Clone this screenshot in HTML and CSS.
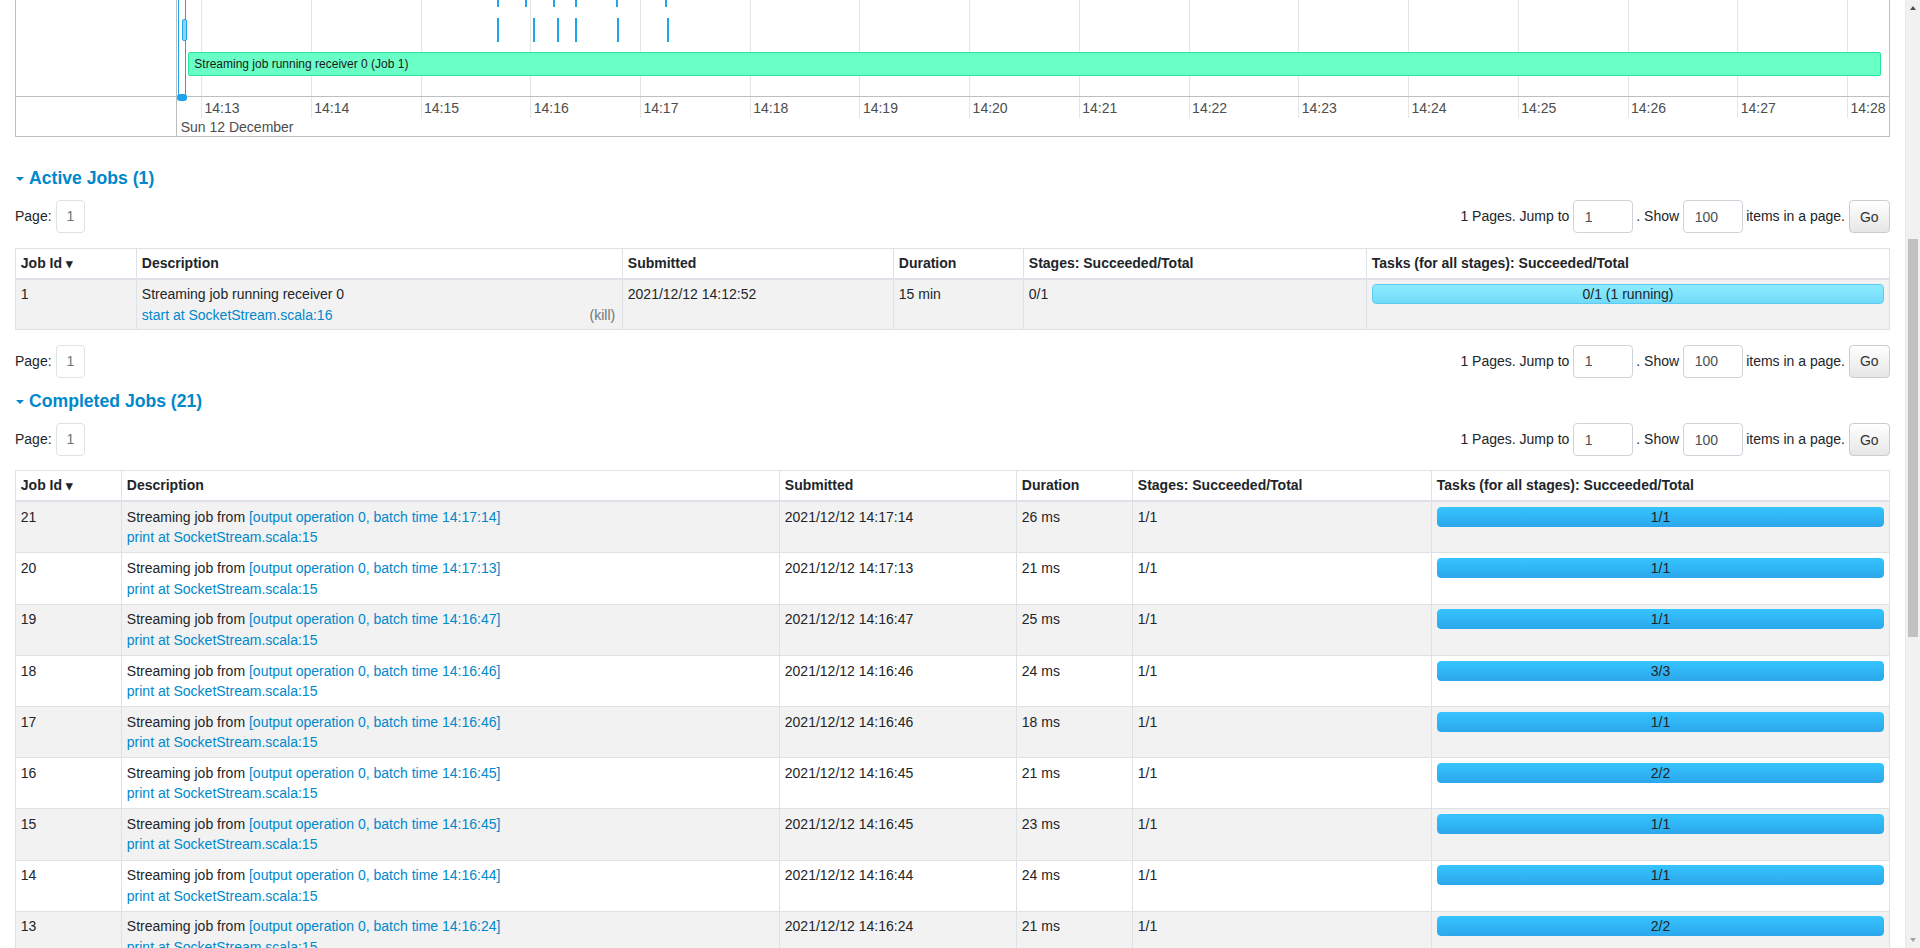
FILE: index.html
```html
<!DOCTYPE html>
<html lang="en">
<head>
<meta charset="utf-8">
<title>SocketStream - Spark Jobs</title>
<link rel="stylesheet" href="styles.css">
</head>
<body>
<nav class="navbar">
  <div class="brand"><span class="logo">Spark</span><span class="version">3.0.0</span></div>
  <ul class="nav-tabs">
    <li class="active">Jobs</li><li>Stages</li><li>Storage</li><li>Environment</li><li>Executors</li><li>Streaming</li>
  </ul>
  <div class="app-name">SocketStream application UI</div>
</nav>
<main class="container">
  <h3 class="page-title">Spark Jobs <sup>(?)</sup></h3>
  <ul class="summary">
    <li><strong>User:</strong> root</li>
    <li><strong>Total Uptime:</strong> 15 min</li>
    <li><strong>Scheduling Mode:</strong> FIFO</li>
    <li><strong>Active Jobs:</strong> 1</li>
    <li><strong>Completed Jobs:</strong> 21</li>
  </ul>
  <div class="section-title"><span class="arrow"></span><span>Event Timeline</span></div>
  <div class="tl-controls">
    <label class="zoom"><input type="checkbox"> Enable zooming</label>
    <div class="legend">
      <span class="lg lg-added"></span>Added
      <span class="lg lg-removed"></span>Removed
      <span class="lg lg-succeeded"></span>Succeeded
      <span class="lg lg-failed"></span>Failed
      <span class="lg lg-running"></span>Running
    </div>
  </div>
  <div class="timeline">
    <div class="tl-body">
      <div class="tl-labels">
        <div class="tl-group-label exec">Executors</div>
        <div class="tl-group-label jobs">Jobs</div>
      </div>
      <div class="tl-canvas">
        <div class="tl-grid" style="left:24px"></div>
        <div class="tl-grid" style="left:133.7px"></div>
        <div class="tl-grid" style="left:243.5px"></div>
        <div class="tl-grid" style="left:353.2px"></div>
        <div class="tl-grid" style="left:462.9px"></div>
        <div class="tl-grid" style="left:572.7px"></div>
        <div class="tl-grid" style="left:682.4px"></div>
        <div class="tl-grid" style="left:792.1px"></div>
        <div class="tl-grid" style="left:901.8px"></div>
        <div class="tl-grid" style="left:1011.6px"></div>
        <div class="tl-grid" style="left:1121.3px"></div>
        <div class="tl-grid" style="left:1231px"></div>
        <div class="tl-grid" style="left:1340.8px"></div>
        <div class="tl-grid" style="left:1450.5px"></div>
        <div class="tl-grid" style="left:1560.2px"></div>
        <div class="tl-grid" style="left:1670px"></div>
        <div class="tl-exec-sep"></div>

        <div class="tl-vline" style="left:1px"></div>
        <div class="tl-vline" style="left:8px"></div>
        <div class="tl-box" style="left:2px">Executor driver added</div>

        <div class="tl-job" style="left:319.9px; bottom:157px"></div>
        <div class="tl-job" style="left:352px; bottom:157px"></div>
        <div class="tl-job" style="left:378px; bottom:157px"></div>
        <div class="tl-job" style="left:439px; bottom:157px"></div>
        <div class="tl-job" style="left:319.9px; bottom:123px"></div>
        <div class="tl-job" style="left:348.4px; bottom:123px"></div>
        <div class="tl-job" style="left:397.5px; bottom:123px"></div>
        <div class="tl-job" style="left:488px; bottom:123px"></div>

        <div class="tl-job" style="left:319.9px; bottom:89px"></div>
        <div class="tl-job" style="left:348.4px; bottom:89px"></div>
        <div class="tl-job" style="left:375.7px; bottom:89px"></div>
        <div class="tl-job" style="left:397.5px; bottom:89px"></div>
        <div class="tl-job" style="left:439px; bottom:89px"></div>
        <div class="tl-job" style="left:488px; bottom:89px"></div>

        <div class="tl-job" style="left:319.9px; bottom:54.3px"></div>
        <div class="tl-job" style="left:356px; bottom:54.3px"></div>
        <div class="tl-job" style="left:379.7px; bottom:54.3px"></div>
        <div class="tl-job" style="left:397.5px; bottom:54.3px"></div>
        <div class="tl-job" style="left:439.5px; bottom:54.3px"></div>
        <div class="tl-job" style="left:490px; bottom:54.3px"></div>
        <div class="tl-job wide" style="left:4.7px; bottom:55px"></div>

        <div class="tl-running">Streaming job running receiver 0 (Job 1)</div>
      </div>
    </div>
    <div class="tl-axis-row">
      <div class="tl-axis-side"></div>
      <div class="tl-axis">
        <div class="tl-dot"></div>
        <div class="ax-grid" style="left:24px"></div><span class="ax-label" style="left:27.5px">14:13</span>
        <div class="ax-grid" style="left:133.7px"></div><span class="ax-label" style="left:137.2px">14:14</span>
        <div class="ax-grid" style="left:243.5px"></div><span class="ax-label" style="left:247px">14:15</span>
        <div class="ax-grid" style="left:353.2px"></div><span class="ax-label" style="left:356.7px">14:16</span>
        <div class="ax-grid" style="left:462.9px"></div><span class="ax-label" style="left:466.4px">14:17</span>
        <div class="ax-grid" style="left:572.7px"></div><span class="ax-label" style="left:576.2px">14:18</span>
        <div class="ax-grid" style="left:682.4px"></div><span class="ax-label" style="left:685.9px">14:19</span>
        <div class="ax-grid" style="left:792.1px"></div><span class="ax-label" style="left:795.6px">14:20</span>
        <div class="ax-grid" style="left:901.8px"></div><span class="ax-label" style="left:905.3px">14:21</span>
        <div class="ax-grid" style="left:1011.6px"></div><span class="ax-label" style="left:1015.1px">14:22</span>
        <div class="ax-grid" style="left:1121.3px"></div><span class="ax-label" style="left:1124.8px">14:23</span>
        <div class="ax-grid" style="left:1231px"></div><span class="ax-label" style="left:1234.5px">14:24</span>
        <div class="ax-grid" style="left:1340.8px"></div><span class="ax-label" style="left:1344.3px">14:25</span>
        <div class="ax-grid" style="left:1450.5px"></div><span class="ax-label" style="left:1454px">14:26</span>
        <div class="ax-grid" style="left:1560.2px"></div><span class="ax-label" style="left:1563.7px">14:27</span>
        <div class="ax-grid" style="left:1670px"></div><span class="ax-label" style="left:1673.5px">14:28</span>
        <span class="ax-major">Sun 12 December</span>
      </div>
    </div>
  </div>

  <div class="section-title first"><span class="arrow"></span><span>Active Jobs (1)</span></div>
  <div class="pager after-title">
    <div class="pager-left">Page: <a class="page-link">1</a></div>
    <div class="pager-right"><span>1 Pages. Jump to</span><input class="pg-input" type="text" value="1"><span>. Show</span><input class="pg-input" type="text" value="100"><span>items in a page.</span><button class="go-btn">Go</button></div>
  </div>
  <table class="jobs-table active-table">
    <colgroup><col class="c1"><col class="c2"><col class="c3"><col class="c4"><col class="c5"><col></colgroup>
    <thead>
      <tr><th>Job Id <span class="sort">&#x25BE;</span></th><th>Description</th><th>Submitted</th><th>Duration</th><th>Stages: Succeeded/Total</th><th>Tasks (for all stages): Succeeded/Total</th></tr>
    </thead>
    <tbody>
      <tr>
        <td>1</td>
        <td><a class="kill">(kill)</a><span class="desc">Streaming job running receiver 0</span><a class="name-link">start at SocketStream.scala:16</a></td>
        <td>2021/12/12 14:12:52</td>
        <td>15 min</td>
        <td>0/1</td>
        <td><div class="progress"><div class="bar running" style="width:100%"></div><span class="ptext">0/1 (1 running)</span></div></td>
      </tr>
    </tbody>
  </table>
  <div class="pager after-table">
    <div class="pager-left">Page: <a class="page-link">1</a></div>
    <div class="pager-right"><span>1 Pages. Jump to</span><input class="pg-input" type="text" value="1"><span>. Show</span><input class="pg-input" type="text" value="100"><span>items in a page.</span><button class="go-btn">Go</button></div>
  </div>

  <div class="section-title next"><span class="arrow"></span><span>Completed Jobs (21)</span></div>
  <div class="pager after-title">
    <div class="pager-left">Page: <a class="page-link">1</a></div>
    <div class="pager-right"><span>1 Pages. Jump to</span><input class="pg-input" type="text" value="1"><span>. Show</span><input class="pg-input" type="text" value="100"><span>items in a page.</span><button class="go-btn">Go</button></div>
  </div>
  <table class="jobs-table completed-table">
    <colgroup><col class="c1"><col class="c2"><col class="c3"><col class="c4"><col class="c5"><col></colgroup>
    <thead>
      <tr><th>Job Id <span class="sort">&#x25BE;</span></th><th>Description</th><th>Submitted</th><th>Duration</th><th>Stages: Succeeded/Total</th><th>Tasks (for all stages): Succeeded/Total</th></tr>
    </thead>
    <tbody>
      <tr><td>21</td><td><span class="desc">Streaming job from <a>[output operation 0, batch time 14:17:14]</a></span><a class="name-link">print at SocketStream.scala:15</a></td><td>2021/12/12 14:17:14</td><td>26 ms</td><td>1/1</td><td><div class="progress"><div class="bar completed" style="width:100%"></div><span class="ptext">1/1</span></div></td></tr>
      <tr><td>20</td><td><span class="desc">Streaming job from <a>[output operation 0, batch time 14:17:13]</a></span><a class="name-link">print at SocketStream.scala:15</a></td><td>2021/12/12 14:17:13</td><td>21 ms</td><td>1/1</td><td><div class="progress"><div class="bar completed" style="width:100%"></div><span class="ptext">1/1</span></div></td></tr>
      <tr><td>19</td><td><span class="desc">Streaming job from <a>[output operation 0, batch time 14:16:47]</a></span><a class="name-link">print at SocketStream.scala:15</a></td><td>2021/12/12 14:16:47</td><td>25 ms</td><td>1/1</td><td><div class="progress"><div class="bar completed" style="width:100%"></div><span class="ptext">1/1</span></div></td></tr>
      <tr><td>18</td><td><span class="desc">Streaming job from <a>[output operation 0, batch time 14:16:46]</a></span><a class="name-link">print at SocketStream.scala:15</a></td><td>2021/12/12 14:16:46</td><td>24 ms</td><td>1/1</td><td><div class="progress"><div class="bar completed" style="width:100%"></div><span class="ptext">3/3</span></div></td></tr>
      <tr><td>17</td><td><span class="desc">Streaming job from <a>[output operation 0, batch time 14:16:46]</a></span><a class="name-link">print at SocketStream.scala:15</a></td><td>2021/12/12 14:16:46</td><td>18 ms</td><td>1/1</td><td><div class="progress"><div class="bar completed" style="width:100%"></div><span class="ptext">1/1</span></div></td></tr>
      <tr><td>16</td><td><span class="desc">Streaming job from <a>[output operation 0, batch time 14:16:45]</a></span><a class="name-link">print at SocketStream.scala:15</a></td><td>2021/12/12 14:16:45</td><td>21 ms</td><td>1/1</td><td><div class="progress"><div class="bar completed" style="width:100%"></div><span class="ptext">2/2</span></div></td></tr>
      <tr><td>15</td><td><span class="desc">Streaming job from <a>[output operation 0, batch time 14:16:45]</a></span><a class="name-link">print at SocketStream.scala:15</a></td><td>2021/12/12 14:16:45</td><td>23 ms</td><td>1/1</td><td><div class="progress"><div class="bar completed" style="width:100%"></div><span class="ptext">1/1</span></div></td></tr>
      <tr><td>14</td><td><span class="desc">Streaming job from <a>[output operation 0, batch time 14:16:44]</a></span><a class="name-link">print at SocketStream.scala:15</a></td><td>2021/12/12 14:16:44</td><td>24 ms</td><td>1/1</td><td><div class="progress"><div class="bar completed" style="width:100%"></div><span class="ptext">1/1</span></div></td></tr>
      <tr><td>13</td><td><span class="desc">Streaming job from <a>[output operation 0, batch time 14:16:24]</a></span><a class="name-link">print at SocketStream.scala:15</a></td><td>2021/12/12 14:16:24</td><td>21 ms</td><td>1/1</td><td><div class="progress"><div class="bar completed" style="width:100%"></div><span class="ptext">2/2</span></div></td></tr>
      <tr><td>12</td><td><span class="desc">Streaming job from <a>[output operation 0, batch time 14:16:23]</a></span><a class="name-link">print at SocketStream.scala:15</a></td><td>2021/12/12 14:16:23</td><td>22 ms</td><td>1/1</td><td><div class="progress"><div class="bar completed" style="width:100%"></div><span class="ptext">1/1</span></div></td></tr>
      <tr><td>11</td><td><span class="desc">Streaming job from <a>[output operation 0, batch time 14:16:23]</a></span><a class="name-link">print at SocketStream.scala:15</a></td><td>2021/12/12 14:16:23</td><td>20 ms</td><td>1/1</td><td><div class="progress"><div class="bar completed" style="width:100%"></div><span class="ptext">1/1</span></div></td></tr>
      <tr><td>10</td><td><span class="desc">Streaming job from <a>[output operation 0, batch time 14:16:22]</a></span><a class="name-link">print at SocketStream.scala:15</a></td><td>2021/12/12 14:16:22</td><td>25 ms</td><td>1/1</td><td><div class="progress"><div class="bar completed" style="width:100%"></div><span class="ptext">2/2</span></div></td></tr>
      <tr><td>9</td><td><span class="desc">Streaming job from <a>[output operation 0, batch time 14:16:06]</a></span><a class="name-link">print at SocketStream.scala:15</a></td><td>2021/12/12 14:16:06</td><td>23 ms</td><td>1/1</td><td><div class="progress"><div class="bar completed" style="width:100%"></div><span class="ptext">1/1</span></div></td></tr>
      <tr><td>8</td><td><span class="desc">Streaming job from <a>[output operation 0, batch time 14:16:05]</a></span><a class="name-link">print at SocketStream.scala:15</a></td><td>2021/12/12 14:16:05</td><td>19 ms</td><td>1/1</td><td><div class="progress"><div class="bar completed" style="width:100%"></div><span class="ptext">1/1</span></div></td></tr>
      <tr><td>7</td><td><span class="desc">Streaming job from <a>[output operation 0, batch time 14:16:05]</a></span><a class="name-link">print at SocketStream.scala:15</a></td><td>2021/12/12 14:16:05</td><td>24 ms</td><td>1/1</td><td><div class="progress"><div class="bar completed" style="width:100%"></div><span class="ptext">1/1</span></div></td></tr>
      <tr><td>6</td><td><span class="desc">Streaming job from <a>[output operation 0, batch time 14:16:04]</a></span><a class="name-link">print at SocketStream.scala:15</a></td><td>2021/12/12 14:16:04</td><td>27 ms</td><td>1/1</td><td><div class="progress"><div class="bar completed" style="width:100%"></div><span class="ptext">2/2</span></div></td></tr>
      <tr><td>5</td><td><span class="desc">Streaming job from <a>[output operation 0, batch time 14:15:36]</a></span><a class="name-link">print at SocketStream.scala:15</a></td><td>2021/12/12 14:15:36</td><td>22 ms</td><td>1/1</td><td><div class="progress"><div class="bar completed" style="width:100%"></div><span class="ptext">1/1</span></div></td></tr>
      <tr><td>4</td><td><span class="desc">Streaming job from <a>[output operation 0, batch time 14:15:35]</a></span><a class="name-link">print at SocketStream.scala:15</a></td><td>2021/12/12 14:15:35</td><td>21 ms</td><td>1/1</td><td><div class="progress"><div class="bar completed" style="width:100%"></div><span class="ptext">1/1</span></div></td></tr>
      <tr><td>3</td><td><span class="desc">Streaming job from <a>[output operation 0, batch time 14:15:35]</a></span><a class="name-link">print at SocketStream.scala:15</a></td><td>2021/12/12 14:15:35</td><td>26 ms</td><td>1/1</td><td><div class="progress"><div class="bar completed" style="width:100%"></div><span class="ptext">1/1</span></div></td></tr>
      <tr><td>2</td><td><span class="desc">Streaming job from <a>[output operation 0, batch time 14:15:34]</a></span><a class="name-link">print at SocketStream.scala:15</a></td><td>2021/12/12 14:15:34</td><td>48 ms</td><td>1/1</td><td><div class="progress"><div class="bar completed" style="width:100%"></div><span class="ptext">2/2</span></div></td></tr>
      <tr><td>0</td><td><span class="desc">Streaming job running receiver 0</span><a class="name-link">start at SocketStream.scala:16</a></td><td>2021/12/12 14:12:51</td><td>0.9 s</td><td>1/1</td><td><div class="progress"><div class="bar completed" style="width:100%"></div><span class="ptext">50/50</span></div></td></tr>
    </tbody>
  </table>
  <div class="pager after-table">
    <div class="pager-left">Page: <a class="page-link">1</a></div>
    <div class="pager-right"><span>1 Pages. Jump to</span><input class="pg-input" type="text" value="1"><span>. Show</span><input class="pg-input" type="text" value="100"><span>items in a page.</span><button class="go-btn">Go</button></div>
  </div>
</main>
<div class="fake-scrollbar" aria-hidden="true">
  <span class="sb-up"></span>
  <span class="sb-thumb"></span>
  <span class="sb-down"></span>
</div>
<script src="script.js"></script>
</body>
</html>
```

FILE: styles.css
```css
* { box-sizing: border-box; }
html { scroll-behavior: auto; }
body {
  margin: 0;
  padding-right: 15px;
  font-family: "Liberation Sans", Arial, Helvetica, sans-serif;
  font-size: 14px;
  line-height: 20.4px;
  color: #212529;
  background: #fff;
}
a { color: #0088cc; text-decoration: none; cursor: pointer; }

/* navbar (above the visible area) */
.navbar {
  height: 50px;
  display: flex;
  align-items: center;
  gap: 24px;
  padding: 0 15px;
  background: #f8f9fa;
  border-bottom: 1px solid #dee2e6;
}
.brand { display: flex; align-items: baseline; gap: 4px; }
.logo { font-size: 22px; font-weight: bold; color: #e25a1c; }
.version { font-size: 12px; color: #777; }
.nav-tabs { display: flex; gap: 20px; list-style: none; margin: 0; padding: 0; }
.nav-tabs li { color: #555; }
.nav-tabs li.active { color: #212529; font-weight: bold; }
.app-name { margin-left: auto; color: #555; }

.container { padding: 0 15px 21px; }

.page-title { font-size: 24px; line-height: 29px; margin: 20px 0 10px; font-weight: 500; }
.page-title sup { font-size: 12px; color: #0088cc; }
.summary { list-style: none; margin: 0 0 10px; padding: 0; }
.summary li { line-height: 20px; }

.section-title {
  display: flex;
  align-items: center;
  font-size: 17.6px;
  line-height: 21.12px;
  font-weight: bold;
  color: #0088cc;
}
.section-title.first { margin-top: 30.6px; }
.section-title.next { margin-top: 13.3px; }
.arrow {
  display: inline-block;
  width: 0;
  height: 0;
  border-left: 4px solid transparent;
  border-right: 4px solid transparent;
  border-top: 4.5px solid #0088cc;
  margin: 2px 5.6px 0 0.5px;
}

.tl-controls {
  height: 50px;
  margin-top: 10px;
  display: flex;
  align-items: flex-start;
  gap: 30px;
}
.zoom { display: flex; align-items: center; gap: 4px; }
.legend { display: flex; align-items: center; gap: 6px; color: #555; }
.lg { display: inline-block; width: 14px; height: 14px; border: 1px solid #999; margin-left: 8px; }
.lg-added { background: #a0dfff; border-color: #3ec0ff; }
.lg-removed { background: #ffcda0; }
.lg-succeeded { background: #a0dfff; border-color: #1ca5ec; }
.lg-failed { background: #ff7a7a; }
.lg-running { background: #6affc6; border-color: #27e598; }

/* timeline */
.timeline { border: 1px solid #bfbfbf; }
.tl-body { display: flex; height: 318px; }
.tl-labels {
  width: 161px;
  flex: none;
  border-right: 1px solid #bfbfbf;
  display: flex;
  flex-direction: column;
}
.tl-group-label { padding: 5px; color: #4d4d4d; }
.tl-group-label.exec { height: 91px; border-bottom: 1px solid #bfbfbf; }
.tl-canvas { flex: 1; position: relative; overflow: hidden; }
.tl-grid { position: absolute; top: 0; bottom: 0; width: 1px; background: #e5e5e5; }
.tl-exec-sep { position: absolute; left: 0; right: 0; top: 90px; height: 1px; background: #bfbfbf; }
.tl-vline { position: absolute; top: 40px; bottom: 0; width: 1px; background: #1ca5ec; }
.tl-box {
  position: absolute;
  top: 10px;
  padding: 2px 5px;
  font-size: 12px;
  line-height: 16px;
  background: #a0dfff;
  border: 1px solid #1ca5ec;
  border-radius: 2px;
  white-space: nowrap;
}
.tl-job {
  position: absolute;
  width: 2px;
  height: 23.4px;
  background: #1ca5ec;
}
.tl-job.wide {
  width: 5.6px;
  height: 22px;
  background: #8ed6f8;
  border: 1px solid #1ca5ec;
  border-radius: 2px;
}
.tl-running {
  position: absolute;
  left: 10.5px;
  width: 1693px;
  bottom: 20px;
  height: 24px;
  padding: 0 5.8px;
  font-size: 12px;
  line-height: 22px;
  color: #1a1a1a;
  background: #6affc6;
  border: 1px solid #27e598;
  border-radius: 2px;
  white-space: nowrap;
}
.tl-axis-row { display: flex; border-top: 1px solid #bfbfbf; height: 40px; }
.tl-axis-side { width: 161px; flex: none; border-right: 1px solid #bfbfbf; }
.tl-axis { flex: 1; position: relative; }
.ax-grid { position: absolute; top: 0; height: 21px; width: 1px; background: #e5e5e5; }
.ax-label {
  position: absolute;
  top: 3px;
  font-size: 14px;
  line-height: 16px;
  color: #4d4d4d;
  white-space: nowrap;
}
.ax-major {
  position: absolute;
  top: 22.3px;
  left: 3.7px;
  font-size: 14px;
  line-height: 16px;
  color: #4d4d4d;
  white-space: nowrap;
}
.tl-dot {
  position: absolute;
  left: 0.3px;
  top: -3px;
  width: 10px;
  height: 6.5px;
  border-radius: 3px;
  background: #1ca5ec;
}

/* pagination */
.pager {
  display: flex;
  align-items: center;
  justify-content: space-between;
  height: 32.4px;
}
.pager.after-title { margin-top: 11.5px; }
.pager.after-table { margin-top: 15px; }
.pager-left { display: flex; align-items: center; gap: 4.5px; }
.page-link {
  display: inline-block;
  width: 28.6px;
  height: 32.4px;
  line-height: 30.4px;
  text-align: center;
  border: 1px solid #dee2e6;
  border-radius: 4px;
  color: #6c757d;
  background: #fff;
}
.pager-right { display: flex; align-items: center; gap: 3.5px; }
.pg-input {
  width: 60px;
  height: 32.4px;
  padding: 0 11px;
  border: 1px solid #ced4da;
  border-radius: 4px;
  font: 14px "Liberation Sans", Arial, sans-serif;
  color: #495057;
  background: #fff;
}
.go-btn {
  width: 41.5px;
  height: 32.4px;
  padding: 0;
  border: 1px solid #ccc;
  border-radius: 4px;
  font: 14px "Liberation Sans", Arial, sans-serif;
  color: #333;
  background: linear-gradient(#ffffff, #e6e6e6);
}

/* tables */
.jobs-table {
  width: 100%;
  border-collapse: collapse;
  table-layout: fixed;
  margin-top: 15px;
}
.completed-table { margin-top: 14px; }
.jobs-table th,
.jobs-table td {
  border: 1px solid #dee2e6;
  padding: 4.7px 4.8px;
  text-align: left;
  vertical-align: top;
}
.active-table td { padding-top: 4.2px; padding-bottom: 4px; }
.jobs-table th {
  font-weight: bold;
  padding: 4px 4.8px;
  border-bottom: 2px solid #dee2e6;
  white-space: nowrap;
}
.jobs-table tbody tr:nth-child(odd) { background: #f2f2f2; }
.sort { font-size: 13px; }
.active-table .c1 { width: 121px; }
.active-table .c2 { width: 486px; }
.active-table .c3 { width: 271px; }
.active-table .c4 { width: 130px; }
.active-table .c5 { width: 343px; }
.completed-table .c1 { width: 106px; }
.completed-table .c2 { width: 658px; }
.completed-table .c3 { width: 237px; }
.completed-table .c4 { width: 116px; }
.completed-table .c5 { width: 299px; }
.desc { display: block; }
.name-link { display: block; }
.kill { float: right; margin-top: 20.4px; margin-right: 2px; color: #6c757d; }

.progress {
  position: relative;
  height: 20px;
  border-radius: 4px;
  overflow: hidden;
  background: #f5f5f5;
}
.bar { position: absolute; left: 0; top: 0; bottom: 0; border-radius: 4px; }
.bar.completed { background: linear-gradient(#36c4ff, #2ba7eb); }
.bar.running {
  background: linear-gradient(#8cecfd, #72dbf9);
  border: 1px solid #5fcaf1;
}
.ptext {
  position: relative;
  display: block;
  text-align: center;
  line-height: 20px;
  color: #212529;
}

/* browser scrollbar as seen in the screenshot */
.fake-scrollbar {
  position: fixed;
  top: 0;
  right: 0;
  width: 15px;
  height: 100vh;
  background: #f1f1f1;
  border-left: 1px solid #e8e8e8;
}
.sb-thumb {
  position: absolute;
  left: 2px;
  right: 2px;
  top: 239px;
  height: 398px;
  background: #c1c1c1;
}
.sb-up,
.sb-down {
  position: absolute;
  left: 4px;
  width: 0;
  height: 0;
  border-left: 3.5px solid transparent;
  border-right: 3.5px solid transparent;
}
.sb-up { top: 6px; border-bottom: 4px solid #505050; }
.sb-down { bottom: 6px; border-top: 4px solid #a3a3a3; }
```

FILE: script.js
```js
(function () {
  function align() {
    var axis = document.querySelector('.tl-axis-row');
    if (!axis) return;
    var y = axis.getBoundingClientRect().top + window.scrollY - 96;
    window.scrollTo(0, y);
  }
  align();
  window.addEventListener('load', align);
})();
```
